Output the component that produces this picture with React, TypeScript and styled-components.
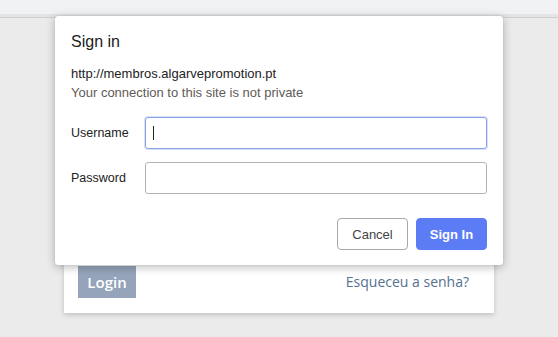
import React from "react";
import styled, { createGlobalStyle } from "styled-components";

const Global = createGlobalStyle`
  html, body { margin: 0; padding: 0; }
  body {
    background: #ebebeb;
    width: 558px;
    height: 337px;
    overflow: hidden;
    font-family: "Liberation Sans", Arial, sans-serif;
  }
`;

const Page = styled.div`
  position: relative;
  width: 558px;
  height: 337px;
`;

const TopBar = styled.div`
  height: 14px;
  background: #f1f2f4;
  border-bottom: 3px solid #e4e4e4;
  box-shadow: 0 1px 0 #cfcfcf;
`;

const Stage = styled.div`
  padding: 13px 0 0 64px;
`;

const Card = styled.div`
  width: 430px;
  height: 283px;
  box-sizing: border-box;
  background: #fff;
  box-shadow: 0 2px 5px rgba(0, 0, 0, 0.18);
  padding: 0 25px 15px 14px;
  display: flex;
  align-items: flex-end;
  justify-content: space-between;
  font-family: "Open Sans", sans-serif;
`;

const LoginButton = styled.div`
  width: 58px;
  height: 32px;
  background: #95a4bb;
  color: #fff;
  font-weight: 600;
  font-size: 15px;
  display: flex;
  align-items: center;
  justify-content: center;
`;

const Forgot = styled.a`
  color: #56708f;
  font-size: 14px;
  line-height: 32px;
  text-decoration: none;
`;

const Dialog = styled.div`
  position: absolute;
  left: 55px;
  top: 16px;
  width: 448px;
  box-sizing: border-box;
  background: #fff;
  border-radius: 3px;
  box-shadow: 0 2px 10px rgba(0, 0, 0, 0.28), 0 0 1px rgba(0, 0, 0, 0.25);
  padding: 16px 16px 15px 16px;
  color: #222;
`;

const Title = styled.div`
  font-size: 16px;
  line-height: 20px;
  color: #202020;
  margin-bottom: 12px;
`;

const InfoLine = styled.div<{ $muted?: boolean }>`
  font-size: 13px;
  line-height: 19px;
  color: ${(p) => (p.$muted ? "#5f5a56" : "#222")};
`;

const Form = styled.div`
  margin-top: 15px;
  display: flex;
  flex-direction: column;
  gap: 13px;
`;

const Row = styled.label`
  display: flex;
  align-items: center;
`;

const Label = styled.span`
  width: 74px;
  font-size: 12.5px;
  color: #222;
`;

const Input = styled.div<{ $focused?: boolean }>`
  flex: 1;
  height: 32px;
  box-sizing: border-box;
  border-radius: 3px;
  border: 1px solid ${(p) => (p.$focused ? "#8aa2e6" : "#b3b3b3")};
  box-shadow: ${(p) => (p.$focused ? "0 0 0 1px rgba(138,162,230,0.35)" : "none")};
  display: flex;
  align-items: center;
  padding-left: 7px;
`;

const Caret = styled.span`
  width: 1px;
  height: 14px;
  background: #222;
`;

const Actions = styled.div`
  margin-top: 24px;
  display: flex;
  justify-content: flex-end;
  gap: 8px;
`;

const Button = styled.button<{ $primary?: boolean }>`
  width: 71px;
  height: 32px;
  box-sizing: border-box;
  border-radius: 4px;
  font-family: "Liberation Sans", Arial, sans-serif;
  font-size: 13px;
  font-weight: ${(p) => (p.$primary ? 700 : 400)};
  border: 1px solid ${(p) => (p.$primary ? "#5c7cf6" : "#a8a8a8")};
  background: ${(p) => (p.$primary ? "#5c7cf6" : "#fff")};
  color: ${(p) => (p.$primary ? "#fff" : "#444")};
  padding: 0;
`;

export default function App() {
  return (
    <Page>
      <Global />
      <TopBar />
      <Stage>
        <Card>
          <LoginButton>Login</LoginButton>
          <Forgot>Esqueceu a senha?</Forgot>
        </Card>
      </Stage>
      <Dialog>
        <Title>Sign in</Title>
        <InfoLine>http://membros.algarvepromotion.pt</InfoLine>
        <InfoLine $muted>Your connection to this site is not private</InfoLine>
        <Form>
          <Row>
            <Label>Username</Label>
            <Input $focused>
              <Caret />
            </Input>
          </Row>
          <Row>
            <Label>Password</Label>
            <Input />
          </Row>
        </Form>
        <Actions>
          <Button>Cancel</Button>
          <Button $primary>Sign In</Button>
        </Actions>
      </Dialog>
    </Page>
  );
}
